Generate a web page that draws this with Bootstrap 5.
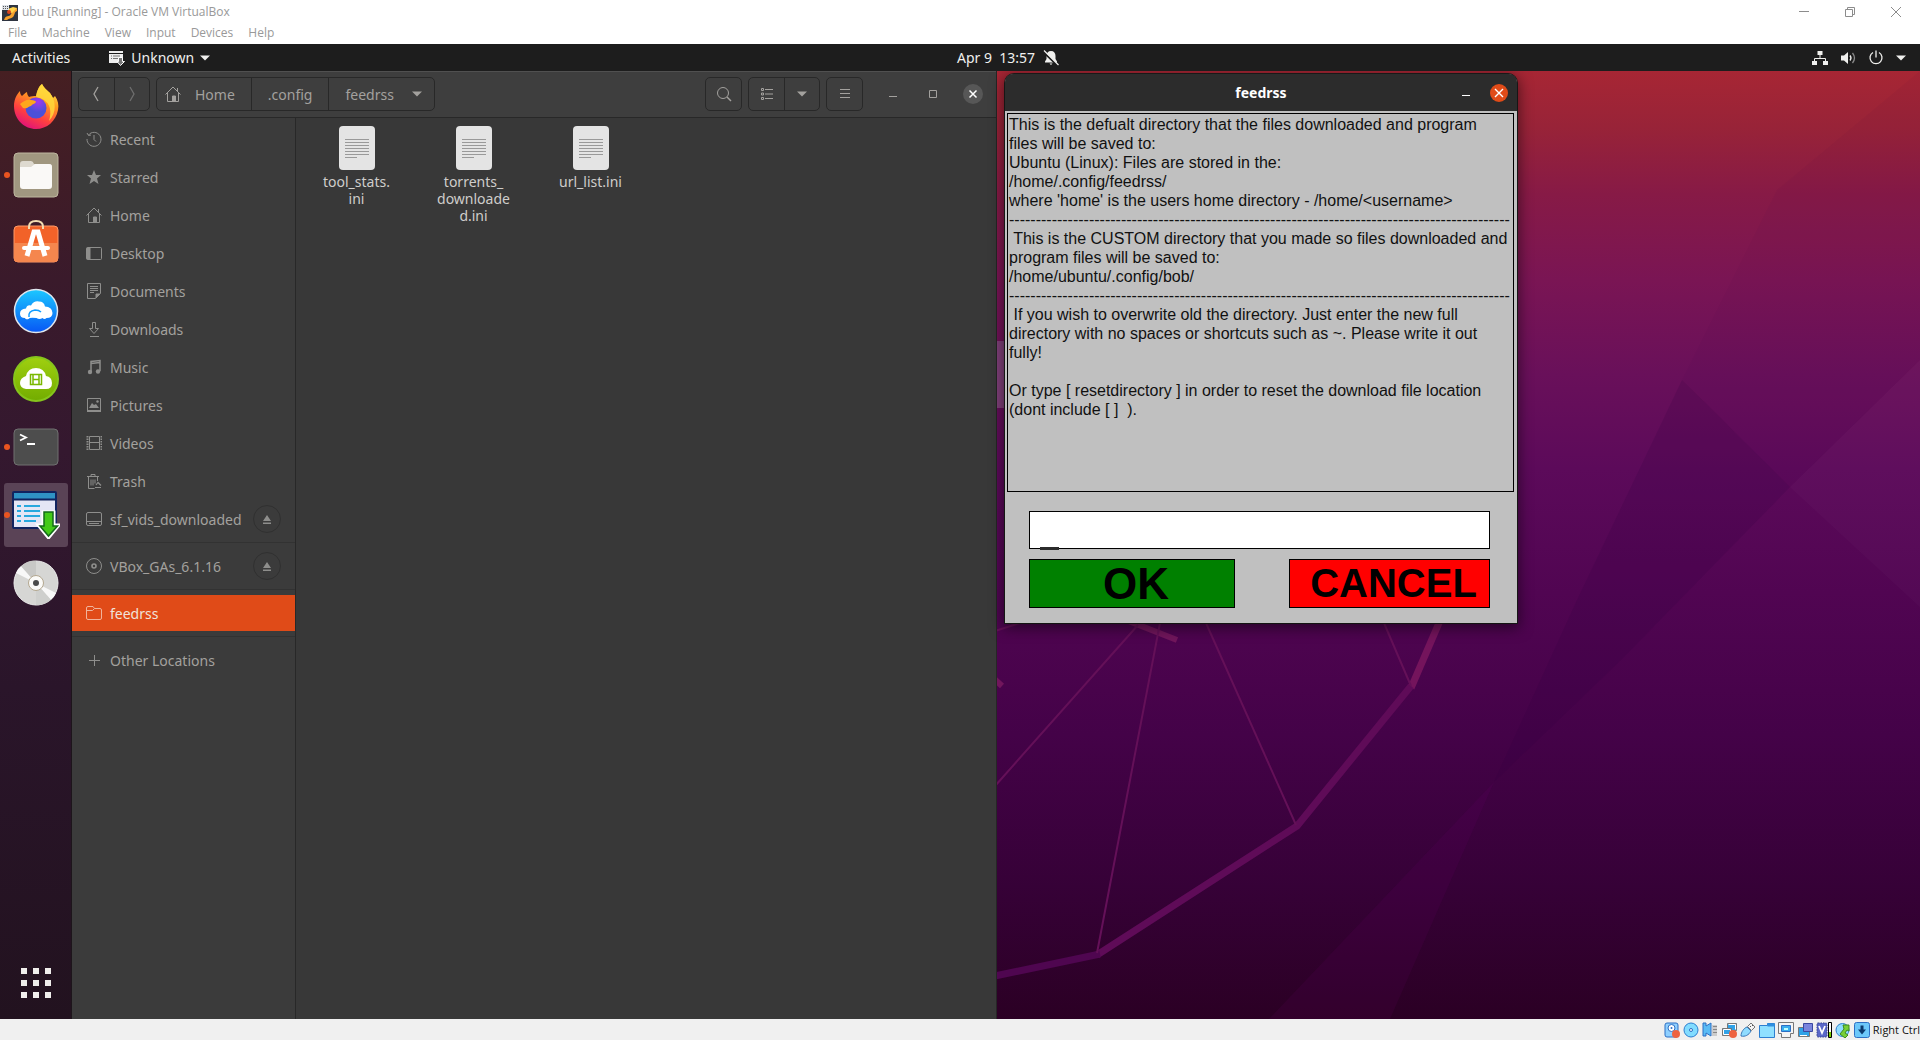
<!DOCTYPE html>
<html lang="en">
<head>
<meta charset="utf-8">
<meta name="viewport" content="width=device-width, initial-scale=1">
<title>ubu [Running] - Oracle VM VirtualBox</title>
<link rel="stylesheet" href="https://cdn.jsdelivr.net/npm/bootstrap@5.3.0/dist/css/bootstrap.min.css">
<style>
  body { font-family: "Noto Sans", sans-serif; font-size: 14px; line-height: 17px; background: #2b0224; }
  a { text-decoration: none; color: inherit; }
  svg { display: block; flex: none; }
  button { padding: 0; border: 0; background: none; color: inherit; }

  /* host window */
  .host-head { background: #fff; color: #999; font-family: "Open Sans", sans-serif; font-size: 12px; height: 44px; line-height: 16px; }
  .host-caption { height: 23px; }
  .host-menu { gap: 15px; padding: 2px 8px 0; }
  .host-controls { gap: 30px; padding-right: 18px; color: #8c8c8c; }
  .host-status { height: 21px; background: #f0f0f0; color: #111; gap: 3px; font-family: "Open Sans", sans-serif; font-size: 11px; }

  /* top panel */
  .panel { height: 27px; line-height: 16px; background: #1d1d1d; color: #f0f0ee; display: grid; grid-template-columns: 1fr auto 1fr; padding: 0 14px 0 12px; }
  .panel-app { margin-left: 39px; gap: 6px; }
  .panel-clock { gap: 8px; padding-left: 98px; }

  .stage { background: #2b0224; }
  .wallpaper { position: absolute; inset: 0; width: 100%; height: 100%; }

  /* dock */
  .dock { width: 72px; flex: none; padding: 4px; gap: 4px; background: linear-gradient(#461f22, #3a1a2b 22%, #34182f 40%, #2a152a 65%, #22121f); border-right: 1px solid #1d151b; }
  .dock-item { position: relative; width: 64px; height: 64px; border-radius: 3px; }
  .dock-item.on { background: #5a4356; }
  .dock-item.running::before { content: ""; position: absolute; left: 0; top: 29px; width: 6px; height: 6px; border-radius: 50%; background: #e95420; }

  /* files */
  .files { width: calc(50% + 1px); flex: none; background: #383838; color: #a3a19e; border-right: 1px solid #262626; }
  .files-head { height: 47px; background: #3e3e3e; border-top: 1px solid #505050; border-bottom: 1px solid #282828; padding: 0 13px 1px 6px; gap: 6px; }
  .hbtn { height: 34px; border: 1px solid #282828; border-radius: 5px; }
  .hbtn > * { height: 100%; display: flex; align-items: center; justify-content: center; }
  .hbtn > * + * { border-left: 1px solid #282828; }
  .hbtn .sq { width: 35px; }
  .crumb-home svg { margin-right: 14px; }
  .crumb-here svg { margin: 0 4px 0 18px; }
  .win-ctls { gap: 20px; margin-left: 14px; }
  .win-ctl { width: 20px; height: 20px; }
  .win-ctl.close { background: #575757; border-radius: 50%; color: #fff; }
  .places { width: 224px; flex: none; background: #3b3b3b; border-right: 1px solid #282828; padding-top: 2px; }
  .place { height: 38px; padding: 0 14px; gap: 8px; }
  .place svg { color: #8e8e8c; }
  .place.picked { height: 36px; margin: 1px 0; background: #e04b18; color: #f0e3da; }
  .place.picked svg { color: #f0b49c; }
  .divider { height: 1px; margin: 4px 0; background: #323232; }
  .eject { width: 28px; height: 28px; border: 1px solid #303030; border-radius: 50%; }
  .file-area { padding: 7px 0 0 2px; }
  .file-cell { width: 117px; gap: 2px; color: #cfcdcb; }

  /* dialog */
  .dlg { width: 512px; margin: 3px 0 0 8px; background: #c0c0c0; border-radius: 9px 9px 0 0; box-shadow: 0 3px 14px 2px rgba(0,0,0,.5), 0 0 0 1px #20201f; font-family: "Liberation Sans", Arial, sans-serif; color: #1a1a1a; }
  .dlg-head { height: 37px; background: #2c2c2c; color: #fff; border-radius: 8px 8px 0 0; font-family: "Noto Sans", sans-serif; font-weight: 700; display: grid; grid-template-columns: 1fr auto 1fr; padding: 0 9px; }
  .dlg-close { width: 18px; height: 18px; border-radius: 50%; background: #e04b18; }
  .dlg-text { margin: 2px 3px 0 2px; height: 379px; border: 1px solid #000; padding: 1px 0 0 1px; font-size: 16px; line-height: 19px; white-space: pre; color: #111; }
  .dlg-form { padding: 19px 27px 15px 24px; }
  .dlg-input { width: 100%; height: 38px; border: 1px solid #000; border-radius: 0; background: #fff; padding: 0 10px; outline: 0; display: block; }
  .caret { position: absolute; left: 11px; bottom: -1px; width: 19px; height: 3px; background: #2b2b2b; }
  .dlg-actions { margin-top: 10px; }
  .dlg-btn { height: 49px; border: 1px solid #000; font-weight: 700; color: #000; line-height: 45px; padding-left: 8px; }
  .dlg-ok { background: #008000; width: 206px; font-size: 44px; }
  .dlg-cancel { background: #f00; width: 201px; font-size: 40px; }
</style>
<script src="https://cdn.jsdelivr.net/npm/bootstrap@5.3.0/dist/js/bootstrap.bundle.min.js"></script>
</head>
<body class="vh-100 d-flex flex-column overflow-hidden">

<header class="host-head">
  <div class="host-caption d-flex align-items-center justify-content-between">
    <div class="d-flex align-items-center gap-1">
      <svg width="18" height="18" viewBox="0 0 18 18"><rect x="2" y="2" width="16" height="16" fill="#2e3440"/><path d="M4 17c2-6 5-2 7-6s2-5 6-6v3c-3 1-2 4-4 6s-4 1-6 3z" fill="#f7a02b"/><path d="M8 6l5-2 4 1-5 5-4-1z" fill="#ffd24a"/><circle cx="9" cy="9" r="2" fill="#d8431c"/><rect x="2" y="2" width="7" height="5" fill="#dfe3e8"/><path d="M3 3.500h5M3 5.500h5" stroke="#555" stroke-dasharray="1 1"/></svg>
      <span>ubu [Running] - Oracle VM VirtualBox</span>
    </div>
    <div class="host-controls d-flex align-items-center">
      <button aria-label="Minimize"><svg width="12" height="12" viewBox="0 0 12 12"><path d="M1 5.500h10" stroke="currentColor"/></svg></button>
      <button class="ms-1" aria-label="Restore"><svg width="12" height="12" viewBox="0 0 12 12" fill="none" stroke="currentColor"><path d="M1.500 3.500h7v7h-7zM3.500 3.500v-2h7v7h-2"/></svg></button>
      <button class="ms-1" aria-label="Close"><svg width="12" height="12" viewBox="0 0 12 12"><path d="M1 1l10 10M11 1L1 11" stroke="currentColor"/></svg></button>
    </div>
  </div>
  <nav class="host-menu d-flex">
    <a href="#">File</a><a href="#">Machine</a><a href="#">View</a><a href="#">Input</a><a href="#">Devices</a><a href="#">Help</a>
  </nav>
</header>

<div class="panel align-items-center">
  <div class="d-flex align-items-center">
    <button>Activities</button>
    <button class="panel-app d-flex align-items-center">
      <svg width="16" height="16" viewBox="0 0 16 16"><path d="M0 1h14v2H0zM0 4h14v4h-4v5H0z" fill="#eee"/><path d="M2 6h1M2 8.500h1M4 6h7M4 8.500h6" stroke="#777"/><path d="M9.500 7.500h4v4h2L11.500 15.500 8 11.500h1.500z" fill="#777" stroke="#fff"/></svg>
      <span>Unknown</span>
      <svg width="10" height="6" viewBox="0 0 10 6"><path d="M0 .5h10L5 5.500z" fill="currentColor"/></svg>
    </button>
  </div>
  <button class="panel-clock d-flex align-items-center"><span>Apr 9&nbsp; 13:57</span>
    <svg width="16" height="16" viewBox="0 0 16 16"><path d="M8 1c3 0 4.500 2 4.500 5v3l1.500 2.500v1H2v-1L3.500 9V6C3.500 3 5 1 8 1zM6.500 13.500h3L8 15z" fill="currentColor"/><path d="M0 1.500l14.500 14" stroke="#1d1d1d" stroke-width="2"/><path d="M1 .5l14.500 14.500" stroke="currentColor" stroke-width="1.200"/></svg>
  </button>
  <div class="d-flex align-items-center justify-content-end">
    <svg class="me-2" width="16" height="16" viewBox="0 0 16 16" fill="currentColor"><path d="M5.500 1h5v4h-5zM0 11h5v4H0zM11 11h5v4h-5z"/><path d="M8 5v3M2.500 11V8.500h11V11" fill="none" stroke="currentColor"/></svg>
    <svg class="ms-1 me-2" width="16" height="16" viewBox="0 0 16 16"><path d="M1 5.500h3L8 2v12L4 10.500H1z" fill="currentColor"/><path d="M10 5.500q2 2.500 0 5" fill="none" stroke="currentColor" stroke-width="1.300"/><path d="M12.500 3q4 5 0 10" fill="none" stroke="#888" stroke-width="1.300"/></svg>
    <svg class="ms-1 me-2" width="16" height="16" viewBox="0 0 16 16" fill="none" stroke="currentColor" stroke-width="1.300"><path d="M5 2.500a6 6 0 1 0 6 0M8 .5v7"/></svg>
    <svg class="ms-1" width="10" height="6" viewBox="0 0 10 6"><path d="M0 .5h10L5 5.500z" fill="currentColor"/></svg>
  </div>
</div>

<main class="stage position-relative flex-grow-1 d-flex overflow-hidden">
  <svg class="wallpaper" viewBox="0 71 1920 948" preserveAspectRatio="xMaxYMid slice" aria-hidden="true">
    <defs><linearGradient id="sky" x1="0" y1="0" x2="0" y2="1">
      <stop offset="0" stop-color="#a72634"/><stop offset=".06" stop-color="#982338"/><stop offset=".13" stop-color="#871a46"/><stop offset=".22" stop-color="#7a1554"/><stop offset=".32" stop-color="#69105a"/><stop offset=".42" stop-color="#5c0a5a"/><stop offset=".55" stop-color="#510552"/><stop offset=".7" stop-color="#440248"/><stop offset=".86" stop-color="#360137"/><stop offset="1" stop-color="#2b0024"/></linearGradient></defs>
    <path d="M0 71h1920v948H0z" fill="url(#sky)"/>
    <path d="M1682 380l108 107-169 173-127 122 83-182z" fill="#300040" opacity=".17"/>
    <path d="M1682 380l95-190L1920 71v289l-130 127z" fill="#300040" opacity=".04"/>
    <path d="M1920 360L1790 487l130 120z" fill="#fff" opacity=".02"/>
    <path d="M1494 782L1269 1019h121z" fill="#800080" opacity=".09"/>
    <path d="M997 341h10v67h-10z" fill="#80407a"/>
    <g fill="none" stroke="#6e1560">
      <path d="M1450 590l-11 33-28 65" stroke-width="7" stroke="#74145c"/>
      <path d="M1411 686l-114 140-200 129" stroke-width="7" stroke="#5f0b58"/><path d="M1100 954l-110 23" stroke-width="7" stroke="#4f0650"/>
      <path d="M1126 620l51 20M990 675l12 11" stroke-width="6" stroke="#71165c"/>
      <path d="M1384 623l27 63M1206 623l90 202M1160 623l-63 330M1138 625L995 786M995 631l28-9" stroke-width="2" stroke="#641058"/>
    </g>
  </svg>

  <nav class="dock position-relative d-flex flex-column">
    <a href="#" class="dock-item d-flex align-items-center justify-content-center" aria-label="Firefox">
      <svg width="48" height="48" viewBox="0 1 48 48"><defs><linearGradient id="fx" x1=".8" y1="0" x2=".3" y2="1"><stop offset="0" stop-color="#fff44f"/><stop offset=".35" stop-color="#ff9a1f"/><stop offset=".7" stop-color="#ff4040"/><stop offset="1" stop-color="#e0107c"/></linearGradient><radialGradient id="fg" cx=".6" cy=".2"><stop offset="0" stop-color="#a436f0"/><stop offset="1" stop-color="#4b50d8"/></radialGradient></defs><path d="M2 24c0-7 3-12 6-15 0 3 1 4 2 5 2-2 3-3 5-4 0 2 1 4 2 5 2-1 5-1 7-1 1-5 3-10 6-12 2 4 5 6 8 9l3 5 2-2c3 4 4 9 3 14-2 11-11 19-22 19S2 38 2 24z" fill="url(#fx)"/><path d="M30 2c2 4 5 6 8 9 6 7 7 20-1 28 3-10 1-17-5-21-4-3-8-2-8-4 1-5 3-10 6-12z" fill="#ffd83b" opacity=".85"/><circle cx="24" cy="26" r="10.500" fill="url(#fg)"/><path d="M8 22c4-3 7-5 11-4 3 0 5 1 5 2-1 2-4 2-5 4-4 1-3 3-8 2z" fill="#ffa71c"/></svg></a>
    <a href="#" class="dock-item running d-flex align-items-center justify-content-center" aria-label="Files">
      <svg width="46" height="46" viewBox="0 0 46 46"><rect x="1" y="1" width="44" height="44" rx="4" fill="#a09780" stroke="#bdb69f"/><path d="M7 12q0-3 3-3h8q2 0 3 3h15q3 0 3 3v18H7z" fill="#dedad0"/><path d="M7 15h11l4-3h14q3 0 3 3v19q0 3-3 3H10q-3 0-3-3z" fill="#faf9f7"/></svg></a>
    <a href="#" class="dock-item d-flex align-items-center justify-content-center" aria-label="Ubuntu Software">
      <svg width="46" height="46" viewBox="0 2 46 46"><rect x="1" y="8" width="44" height="36" rx="4" fill="#f26229" stroke="#ff9a68"/><path d="M1 25h44v15q0 4-3 4H4q-3 0-3-4z" fill="#f5864e"/><path d="M16 11V9q0-6 7-6t7 6v2" fill="none" stroke="#f3ddb2" stroke-width="2"/><path d="M14 38l7-24h4l7 24" fill="none" stroke="#fff" stroke-width="5"/><path d="M11 30h24" stroke="#fff" stroke-width="4" stroke-linecap="round"/></svg></a>
    <a href="#" class="dock-item d-flex align-items-center justify-content-center" aria-label="Cloud">
      <svg width="46" height="46" viewBox="0 0 46 46"><defs><linearGradient id="bl" x2="0" y2="1"><stop offset="0" stop-color="#1cc8ff"/><stop offset="1" stop-color="#0757f5"/></linearGradient></defs><circle cx="23" cy="23" r="21.500" fill="url(#bl)" stroke="#dfe6ee" stroke-width="1.500"/><path d="M12 30q-5 0-5-4.500t6-5q1-4 5-3 3-5 8-4 5 0 6 5 7 0 7.500 6.500 0 5-6 5-2 2-4 0-3 2-6 0-7-1-8 1-3 1-3.500-1z" fill="#fff"/><path d="M16 29q-1-6 6-7 4 0 6 2" fill="none" stroke="#119cff" stroke-width="1.500"/></svg></a>
    <a href="#" class="dock-item d-flex align-items-center justify-content-center" aria-label="Media cloud">
      <svg width="46" height="46" viewBox="0 0 46 46"><defs><linearGradient id="gr" x2="0" y2="1"><stop offset="0" stop-color="#a0d010"/><stop offset="1" stop-color="#72ac00"/></linearGradient></defs><circle cx="23" cy="23" r="22" fill="url(#gr)" stroke="#86c51c" stroke-width="2"/><path d="M13 33q-6-1-6-6t6-7q2-8 10-8t10 8q6 1 6 7t-6 6z" fill="#fff"/><path d="M17.500 18.500h11v10h-11zM20 18.500v10M26 18.500v10M20 23.500h6" fill="none" stroke="#7ab800" stroke-width="1.500"/></svg></a>
    <a href="#" class="dock-item running d-flex align-items-center justify-content-center" aria-label="Terminal">
      <svg width="46" height="38" viewBox="0 0 46 38"><rect x="1" y="1" width="44" height="36" rx="4" fill="#4d4d4d" stroke="#707070"/><path d="M7 6.500l6 3-6 3M14 16h8" fill="none" stroke="#fff" stroke-width="1.800"/></svg></a>
    <a href="#" class="dock-item running on d-flex align-items-center justify-content-center" aria-label="feedrss">
      <svg width="48" height="48" viewBox="0 0 48 48"><rect x="1" y="1" width="43" height="36" rx="1" fill="#e4e6f5" stroke="#11245f" stroke-width="2"/><path d="M2 2h41v6H2z" fill="#2f93c4"/><path d="M1 8.500h43" stroke="#11245f" stroke-width="2"/><path d="M5 15h4M5 20h4M5 25h4M5 30h4M12 15h16M12 20h16M12 25h16M12 30h12" stroke="#27a8de" stroke-width="2"/><path d="M31 21h11v13h5L36.500 47 26 34h5z" fill="#3ec316" stroke="#fff" stroke-width="3"/><path d="M32 21h9v14h4.500L36.500 45 28 35h4z" fill="#43ca18" stroke="#136b19" stroke-width="1.500"/></svg></a>
    <a href="#" class="dock-item d-flex align-items-center justify-content-center" aria-label="Disc">
      <svg width="46" height="46" viewBox="0 0 46 46"><circle cx="23" cy="23" r="22" fill="#d6d6d4" stroke="#ececec"/><path d="M23 23L3 13q2-5 5-7zM23 23l20 10q-2 5-5 7z" fill="#f8f8f8"/><path d="M23 23L8 6q7-6 15-5z" fill="#c8c8c6"/><path d="M23 23l15 17q-7 6-15 5z" fill="#cecfcd"/><circle cx="23" cy="23" r="7.500" fill="#fbfaf8" stroke="#b3a78f"/><circle cx="23" cy="23" r="3" fill="#4a4a4a"/></svg></a>
    <button class="dock-item d-flex align-items-center justify-content-center mt-auto" aria-label="Show Applications">
      <svg width="30" height="30" viewBox="0 0 30 30" fill="#f0eeec"><path d="M0 0h6v6H0zM12 0h6v6h-6zM24 0h6v6h-6zM0 12h6v6H0zM12 12h6v6h-6zM24 12h6v6h-6zM0 24h6v6H0zM12 24h6v6h-6zM24 24h6v6h-6z"/></svg></button>
  </nav>

  <div class="position-relative flex-grow-1 d-flex">
    <section class="files d-flex flex-column">
      <div class="files-head d-flex align-items-center">
        <div class="hbtn d-flex">
          <button class="sq" aria-label="Back"><svg width="16" height="16" viewBox="0 0 16 16" fill="none" stroke="currentColor" stroke-width="1.300"><path d="M9 1L5 8l4 7"/></svg></button>
          <button class="sq" aria-label="Forward"><svg width="16" height="16" viewBox="0 0 16 16" fill="none" stroke="#6f6f6f" stroke-width="1.300"><path d="M6 1l4 7-4 7"/></svg></button>
        </div>
        <div class="hbtn d-flex flex-shrink-0">
          <a href="#" class="crumb-home ps-2 pe-3"><svg width="16" height="16" viewBox="0 0 16 16" fill="none" stroke="currentColor"><path d="M.5 8.500L8 1l7.500 7.500M2.500 7v8.500h11V7M12.500 2v3"/><path d="M7.500 10h3v5h-3z" fill="currentColor"/></svg>Home</a>
          <a href="#" class="px-3">.config</a>
          <a href="#" class="crumb-here ps-3 pe-2">feedrss<svg width="10" height="6" viewBox="0 0 10 6"><path d="M0 .5h10L5 5.500z" fill="currentColor"/></svg></a>
        </div>
        <div class="hbtn ms-auto"><button class="sq" aria-label="Search"><svg width="16" height="16" viewBox="0 0 16 16" fill="none" stroke="currentColor"><circle cx="7" cy="7" r="5.500"/><path d="M11 11l4 4" stroke-width="1.500"/></svg></button></div>
        <div class="hbtn d-flex">
          <button class="sq" aria-label="List view"><svg width="14" height="14" viewBox="0 0 14 14" fill="none" stroke="currentColor"><path d="M1.500 1.500h2v2h-2zM1.500 6h2v2h-2zM1.500 10.500h2v2h-2zM5 2.500h8M5 7h8M5 11.500h8"/></svg></button>
          <button class="sq" aria-label="View options"><svg width="10" height="6" viewBox="0 0 10 6"><path d="M0 .5h10L5 5.500z" fill="currentColor"/></svg></button>
        </div>
        <div class="hbtn"><button class="sq" aria-label="Menu"><svg width="12" height="12" viewBox="0 0 12 12" stroke="currentColor"><path d="M1 1.500h10M1 5.500h10M1 9.500h10"/></svg></button></div>
        <div class="win-ctls d-flex">
          <button class="win-ctl d-flex align-items-center justify-content-center" aria-label="Minimize"><svg width="10" height="10" viewBox="0 0 10 10"><path d="M1 7.500h8" stroke="currentColor"/></svg></button>
          <button class="win-ctl d-flex align-items-center justify-content-center" aria-label="Maximize"><svg width="10" height="10" viewBox="0 0 10 10"><path d="M1.500 1.500h7v7h-7z" fill="none" stroke="currentColor"/></svg></button>
          <button class="win-ctl close d-flex align-items-center justify-content-center" aria-label="Close"><svg width="10" height="10" viewBox="0 0 10 10"><path d="M1.500 1.500l7 7M8.500 1.500l-7 7" stroke="currentColor" stroke-width="1.500"/></svg></button>
        </div>
      </div>
      <div class="d-flex flex-grow-1">
        <nav class="places d-flex flex-column">
          <a href="#" class="place d-flex align-items-center"><svg width="16" height="16" viewBox="0 0 16 16" fill="none" stroke="currentColor"><path d="M2.500 4A7 7 0 1 1 1 8M1 2l1.500 2.500L5 4M8 4v4.500l2 2"/></svg>Recent</a>
          <a href="#" class="place d-flex align-items-center"><svg width="16" height="16" viewBox="0 0 16 16" fill="currentColor"><path d="M8 1l2 5h5l-4 3.500 1.500 5.500L8 12l-4.500 3L5 9.500 1 6h5z"/></svg>Starred</a>
          <a href="#" class="place d-flex align-items-center"><svg width="16" height="16" viewBox="0 0 16 16" fill="none" stroke="currentColor"><path d="M.5 8.500L8 1l7.500 7.500M2.500 7v8.500h11V7M12.500 2v3"/><path d="M7.500 10h3v5h-3z" fill="currentColor"/></svg>Home</a>
          <a href="#" class="place d-flex align-items-center"><svg width="16" height="16" viewBox="0 0 16 16" fill="none" stroke="currentColor"><rect x=".5" y="2.500" width="15" height="12" rx="1"/><path d="M1 3h3v11H1z" fill="currentColor"/></svg>Desktop</a>
          <a href="#" class="place d-flex align-items-center"><svg width="16" height="16" viewBox="0 0 16 16" fill="none" stroke="currentColor"><path d="M1.500.5h13v10l-5 5h-8zM4 3.500h8M4 5.500h8M4 7.500h8M4 9.500h4"/><path d="M14 11h-4v4z" fill="currentColor"/></svg>Documents</a>
          <a href="#" class="place d-flex align-items-center"><svg width="16" height="16" viewBox="0 0 16 16" fill="none" stroke="currentColor"><path d="M6.500 7.500v-6h3v6h3L8 12.500 3.500 7.500zM4 15.500h9"/></svg>Downloads</a>
          <a href="#" class="place d-flex align-items-center"><svg width="16" height="16" viewBox="0 0 16 16" fill="none" stroke="currentColor" stroke-width="1.500"><path d="M5 13V2.500l9-1V12M5 4.500l9-1"/><g fill="currentColor" stroke="none"><circle cx="4" cy="13" r="2.200"/><circle cx="12" cy="12.500" r="2.200"/></g></svg>Music</a>
          <a href="#" class="place d-flex align-items-center"><svg width="16" height="16" viewBox="0 0 16 16" fill="none" stroke="currentColor"><path d="M1.500 1.500h13v13h-13z"/><path d="M1 13h14v2H1zM3 11l3-5 2 2 2-1 3 4z" fill="currentColor" stroke="none"/><circle cx="11.500" cy="4.500" r="1.200" fill="currentColor" stroke="none"/></svg>Pictures</a>
          <a href="#" class="place d-flex align-items-center"><svg width="16" height="16" viewBox="0 0 16 16" fill="none" stroke="currentColor"><path d="M3.500 1.500h10v13h-10zM3.500 7.500h10"/><path d="M1.500 1v14M15.500 1v14" stroke-width="2" stroke-dasharray="1.500 1"/></svg>Videos</a>
          <a href="#" class="place d-flex align-items-center"><svg width="16" height="16" viewBox="0 0 16 16" fill="none" stroke="currentColor"><path d="M1 3.500h12M5 3V1.500h4V3M2.500 4v11.500h6M11.500 4v4M5 6.500v6M7 6.500v6M9 6.500v4"/><path d="M9 14.500h6M10 12l2-2.500 3 3" stroke-width="1.200"/></svg>Trash</a>
          <div class="place d-flex align-items-center"><a href="#" class="d-flex align-items-center gap-2"><svg width="16" height="16" viewBox="0 0 16 16" fill="none" stroke="currentColor"><rect x=".5" y="1.500" width="15" height="13" rx="1.500"/><path d="M1 10.500h14M3 12.500h10"/></svg>sf_vids_downloaded</a><button class="eject ms-auto d-flex align-items-center justify-content-center" aria-label="Eject"><svg width="8" height="9" viewBox="0 0 8 9" fill="currentColor"><path d="M4 0l4 6H0zM0 7.500h8V9H0z"/></svg></button></div>
          <div class="divider"></div>
          <div class="place d-flex align-items-center"><a href="#" class="d-flex align-items-center gap-2"><svg width="16" height="16" viewBox="0 0 16 16" fill="none" stroke="currentColor"><circle cx="8" cy="8" r="7.500"/><circle cx="8" cy="8" r="2" stroke-width="1.600"/></svg>VBox_GAs_6.1.16</a><button class="eject ms-auto d-flex align-items-center justify-content-center" aria-label="Eject"><svg width="8" height="9" viewBox="0 0 8 9" fill="currentColor"><path d="M4 0l4 6H0zM0 7.500h8V9H0z"/></svg></button></div>
          <div class="divider"></div>
          <a href="#" class="place picked d-flex align-items-center"><svg width="16" height="16" viewBox="0 0 16 16" fill="none" stroke="currentColor"><path d="M.5 3q0-1.500 1.500-1.500h5L8.500 3.500h5.500q1.500 0 1.500 1.500v8q0 1.500-1.500 1.500H2Q.5 14.500.5 13zM.5 5.500h6L8.500 3.500"/></svg>feedrss</a>
          <div class="divider"></div>
          <a href="#" class="place d-flex align-items-center"><svg width="16" height="16" viewBox="0 0 16 16" stroke="currentColor"><path d="M8.500 3v11M3 8.500h11"/></svg>Other Locations</a>
        </nav>
        <div class="file-area d-flex flex-grow-1 align-items-start">
          <a href="#" class="file-cell d-flex flex-column align-items-center text-center"><svg width="38" height="46" viewBox="0 0 38 46"><rect x="1" y="1" width="36" height="44" rx="4" fill="#e4e4e4"/><path d="M7 14.500h24M7 17.500h24M7 20.500h24M7 23.500h24M7 26.500h24M7 29.500h24M7 32.500h12" stroke="#999"/></svg><span>tool_stats.<br>ini</span></a>
          <a href="#" class="file-cell d-flex flex-column align-items-center text-center"><svg width="38" height="46" viewBox="0 0 38 46"><rect x="1" y="1" width="36" height="44" rx="4" fill="#e4e4e4"/><path d="M7 14.500h24M7 17.500h24M7 20.500h24M7 23.500h24M7 26.500h24M7 29.500h24M7 32.500h12" stroke="#999"/></svg><span>torrents_<br>downloade<br>d.ini</span></a>
          <a href="#" class="file-cell d-flex flex-column align-items-center text-center"><svg width="38" height="46" viewBox="0 0 38 46"><rect x="1" y="1" width="36" height="44" rx="4" fill="#e4e4e4"/><path d="M7 14.500h24M7 17.500h24M7 20.500h24M7 23.500h24M7 26.500h24M7 29.500h24M7 32.500h12" stroke="#999"/></svg><span>url_list.ini</span></a>
        </div>
      </div>
    </section>

    <section class="dlg align-self-start">
      <div class="dlg-head align-items-center">
        <span></span><span>feedrss</span>
        <div class="d-flex align-items-center justify-content-end gap-3">
          <button class="me-1" aria-label="Minimize"><svg width="8" height="10" viewBox="0 0 8 10"><path d="M0 7.500h8" stroke="#fff"/></svg></button>
          <button class="dlg-close d-flex align-items-center justify-content-center" aria-label="Close"><svg width="10" height="10" viewBox="0 0 10 10"><path d="M1 1l8 8M9 1L1 9" stroke="#fff" stroke-width="1.400"/></svg></button>
        </div>
      </div>
      <div class="dlg-text">This is the defualt directory that the files downloaded and program
files will be saved to:
Ubuntu (Linux): Files are stored in the:
/home/.config/feedrss/
where 'home' is the users home directory - /home/&lt;username&gt;
----------------------------------------------------------------------------------------------
 This is the CUSTOM directory that you made so files downloaded and
program files will be saved to:
/home/ubuntu/.config/bob/
----------------------------------------------------------------------------------------------
 If you wish to overwrite old the directory. Just enter the new full
directory with no spaces or shortcuts such as ~. Please write it out
fully!

Or type [ resetdirectory ] in order to reset the download file location
(dont include [ ]  ).</div>
      <form class="dlg-form">
        <div class="position-relative">
          <input class="dlg-input" type="text" aria-label="New directory">
          <span class="caret"></span>
        </div>
        <div class="dlg-actions d-flex justify-content-between">
          <button type="button" class="dlg-btn dlg-ok">OK</button>
          <button type="button" class="dlg-btn dlg-cancel">CANCEL</button>
        </div>
      </form>
    </section>
  </div>
</main>

<footer class="host-status d-flex align-items-center justify-content-end">
  <svg width="16" height="16" viewBox="0 0 16 16"><rect x="1" y="1" width="13" height="14" rx="2" fill="#8fd0ff" stroke="#2d6fc4"/><circle cx="7.500" cy="6" r="3.500" fill="#fff" stroke="#2d6fc4"/><circle cx="7.500" cy="6" r="1" fill="#2d6fc4"/><circle cx="12" cy="12" r="4" fill="#ee6340"/></svg>
  <svg width="16" height="16" viewBox="0 0 16 16"><circle cx="8" cy="8" r="7" fill="#82dcff" stroke="#2d7fd0"/><circle cx="8" cy="8" r="1.500" fill="#fff" stroke="#2d6fc4"/></svg>
  <svg width="16" height="16" viewBox="0 0 16 16"><path d="M1 1h3v3l5-3v13l-5-3v3H1z" fill="#5bbcf5" stroke="#2d6fc4"/><path d="M10 3h5v11h-5z" fill="#ccc"/><path d="M11 4.500h4M11 7.500h4M11 10.500h4" stroke="#888"/></svg>
  <svg width="16" height="16" viewBox="0 0 16 16"><path d="M6.500 1.500h9v7h-9z" fill="#2fa2e8" stroke="#777"/><path d="M1.500 6.500h9v7h-9z" fill="#2fa2e8" stroke="#777"/><path d="M2.500 7.500h7v5h-7zM7.500 2.500h7v5" fill="none" stroke="#fff"/><circle cx="12" cy="12" r="4" fill="#ee6340"/></svg>
  <svg width="16" height="16" viewBox="0 0 16 16"><path d="M1 14c0-4 3-8 6-9l4 4c-2 4-6 6-10 5z" fill="#8fdcff" stroke="#3a78b8"/><path d="M7.500 4.500L11 1l4 4-3.500 3.500z" fill="#f3f3f3" stroke="#777"/><path d="M10 4l1 1M12 3l1 1" stroke="#555"/></svg>
  <svg width="16" height="16" viewBox="0 0 16 16"><path d="M.5 15.500v-12h8v-2h7v14z" fill="#8fe0ff" stroke="#2d7fd0"/><path d="M8.500 1.500h7v3h-7z" fill="#2d8fe0"/></svg>
  <svg width="16" height="16" viewBox="0 0 16 16"><path d="M.5.5h15v11h-3v4h-9v-4h-3z" fill="#f4f4f4" stroke="#777"/><path d="M3.500 3.500h9v6h-9z" fill="#3aaeee" stroke="#2d6fc4"/><path d="M6 6h4v2H6z" fill="#bff"/></svg>
  <svg width="16" height="16" viewBox="0 0 16 16"><path d="M1.500 5.500h11v9h-11z" fill="#2fa2e8" stroke="#777"/><path d="M6.500 1.500h9v8h-9z" fill="#7a85dd" stroke="#3a48a0"/><path d="M3 13.500h7" stroke="#fff"/></svg>
  <svg width="16" height="16" viewBox="0 0 16 16"><rect x="1" y="1" width="10" height="14" rx="1" fill="#5a68c8" stroke="#39448f" stroke-dasharray="1.500 1"/><path d="M3 4l3 7 3-7" fill="none" stroke="#fff" stroke-width="1.800"/><path d="M12.500.5h3v15h-3z" fill="#fff" stroke="#000"/><path d="M13 10h2v5h-2z" fill="#7c0"/></svg>
  <svg width="16" height="16" viewBox="0 0 16 16"><circle cx="7.500" cy="8" r="6.500" fill="#8fdcff" stroke="#2d7fd0"/><path d="M8 3h6v6l-2-1-2 3 3 2-3 3-5-4 4-5z" fill="#77cf36" stroke="#3d8a1c"/></svg>
  <svg width="16" height="16" viewBox="0 0 16 16"><rect x=".5" y=".5" width="15" height="15" rx="2" fill="#6cc8fa" stroke="#2d6fc4"/><path d="M6.500 3.500h3v4H12l-4 5-4-5h2.500z" fill="#0b3a6e"/></svg>
  <span>Right Ctrl</span>
</footer>
</body>
</html>
